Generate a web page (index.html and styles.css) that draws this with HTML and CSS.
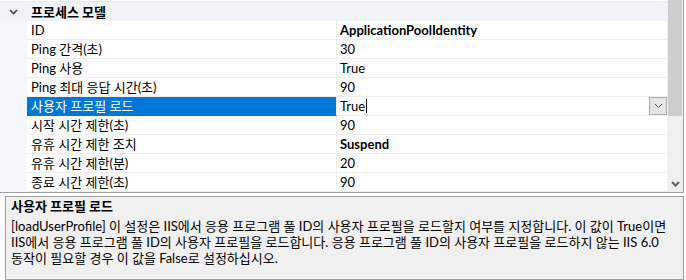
FILE: index.html
```html
<!DOCTYPE html>
<html lang="ko">
<head>
<meta charset="utf-8">
<link rel="stylesheet" href="styles.css">
</head>
<body>
<div class="grid">
  <div class="rows">
    <div class="toprow"></div>
    <div class="cat">
      <span class="exp"><svg width="9" height="6" viewBox="0 0 9 6"><path d="M1 1 L4.5 4.5 L8 1" fill="none" stroke="#404040" stroke-width="1.6"/></svg></span>
      <span class="cat-label">프로세스 모델</span>
    </div>
    <div class="row"><div class="name">ID</div><div class="val bold">ApplicationPoolIdentity</div></div>
    <div class="row"><div class="name">Ping 간격(초)</div><div class="val">30</div></div>
    <div class="row"><div class="name">Ping 사용</div><div class="val">True</div></div>
    <div class="row"><div class="name">Ping 최대 응답 시간(초)</div><div class="val">90</div></div>
    <div class="row sel"><div class="name">사용자 프로필 로드</div><div class="val edit"><span class="edit-text">True</span><span class="caret"></span><span class="dd"><svg width="9" height="6" viewBox="0 0 9 6"><path d="M1 1 L4.5 4.5 L8 1" fill="none" stroke="#505050" stroke-width="1"/></svg></span></div></div>
    <div class="row"><div class="name">시작 시간 제한(초)</div><div class="val">90</div></div>
    <div class="row"><div class="name">유휴 시간 제한 조치</div><div class="val bold">Suspend</div></div>
    <div class="row"><div class="name">유휴 시간 제한(분)</div><div class="val">20</div></div>
    <div class="row"><div class="name">종료 시간 제한(초)</div><div class="val">90</div></div>
  </div>
  <div class="scrollbar">
    <div class="thumb"></div>
    <div class="track"></div>
    <div class="arrow"><svg width="9" height="6" viewBox="0 0 9 6"><path d="M1 1 L4.5 4.5 L8 1" fill="none" stroke="#606060" stroke-width="2"/></svg></div>
  </div>
</div>
<div class="desc">
  <div class="desc-title">사용자 프로필 로드</div>
  <div class="desc-text">[loadUserProfile] 이 설정은 IIS에서 응용 프로그램 풀 ID의 사용자 프로필을 로드할지 여부를 지정합니다. 이 값이 True이면<br>IIS에서 응용 프로그램 풀 ID의 사용자 프로필을 로드합니다. 응용 프로그램 풀 ID의 사용자 프로필을 로드하지 않는 IIS 6.0<br>동작이 필요할 경우 이 값을 False로 설정하십시오.</div>
</div>
</body>
</html>
```

FILE: styles.css
```css
html, body {
  margin: 0;
  padding: 0;
}
body {
  width: 686px;
  height: 280px;
  overflow: hidden;
  background: #ffffff;
  font-family: Lato, "Noto Sans CJK KR", sans-serif;
  font-size: 13px;
  color: #000;
}
.grid {
  display: flex;
  width: 684px;
  height: 193px;
  box-sizing: border-box;
  border-right: 1px solid #a0a0a0;
  border-bottom: 1px solid #a0a0a0;
}
.rows {
  flex: 1;
  background: #f3f6fa;
  display: flex;
  flex-direction: column;
}
.toprow {
  height: 1px;
  background: #ffffff;
  border-bottom: 1px solid #e8ebef;
}
.cat {
  height: 19px;
  display: flex;
  align-items: center;
  background: #f0f4f9;
}
.exp {
  width: 27px;
  display: flex;
  justify-content: center;
  align-items: center;
  padding-top: 1px;
}
.cat-label {
  font-weight: bold;
  padding-left: 4px;
}
.row {
  display: flex;
  height: 19px;
  padding-left: 27px;
}
.name, .val {
  box-sizing: border-box;
  height: 19px;
  line-height: 18px;
  background: #fff;
  border-bottom: 1px solid #f0f0f0;
  white-space: nowrap;
  overflow: hidden;
}
.name {
  width: 310px;
  padding-left: 4px;
  border-right: 1px solid #f0f0f0;
}
.val {
  flex: 1;
  padding-left: 3px;
}
.bold {
  font-weight: bold;
}
.sel .name {
  background: #0078d7;
  color: #fff;
  border-bottom-color: #0078d7;
}
.edit {
  display: flex;
  align-items: center;
  position: relative;
}
.caret {
  display: inline-block;
  width: 1px;
  height: 14px;
  background: #000;
  margin-left: 1px;
}
.dd {
  position: absolute;
  right: 0;
  top: 0;
  width: 18px;
  height: 18px;
  box-sizing: border-box;
  border: 1px solid #adadad;
  background: #e5e5e5;
  display: flex;
  align-items: center;
  justify-content: center;
}
.scrollbar {
  width: 16px;
  display: flex;
  flex-direction: column;
  background: #f0f0f0;
}
.thumb {
  height: 116px;
  margin: 0 1px;
  background: #cdcdcd;
}
.track {
  flex: 1;
}
.arrow {
  height: 17px;
  display: flex;
  align-items: center;
  justify-content: center;
}
.desc {
  margin: 3px 0 0 5px;
  width: 679px;
  height: 84px;
  box-sizing: border-box;
  border: 1px solid #a0a0a0;
  background: #f0f0f0;
  padding: 1px 5px 0 5px;
}
.desc-title {
  font-weight: bold;
  line-height: 17px;
  margin-bottom: 3px;
}
.desc-text {
  line-height: 16px;
  white-space: nowrap;
}
```
